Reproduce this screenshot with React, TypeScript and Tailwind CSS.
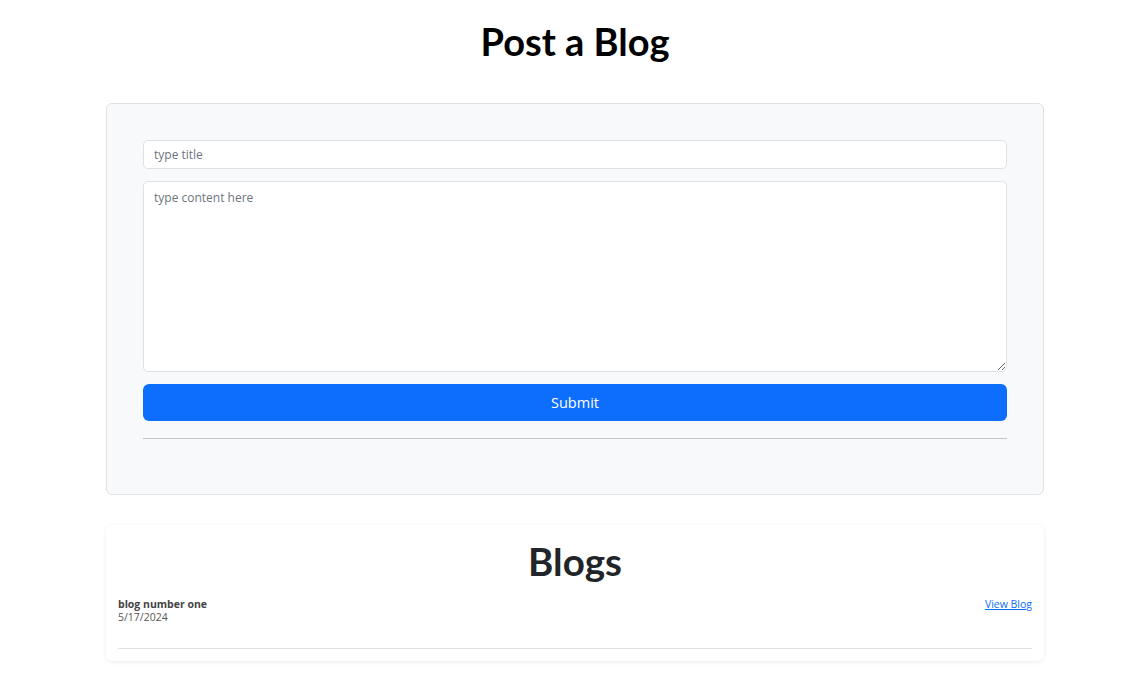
import React from 'react';

export default function App() {
  return (
    <div className="min-h-screen bg-white pl-[15px] font-['Open_Sans','Liberation_Sans',sans-serif] text-[#212529]">
      <div className="mx-auto w-[938px]">
        {/* Page heading */}
        <h1 className="pt-[18px] text-center font-['Lato','Open_Sans',sans-serif] text-[38px] font-bold leading-[47px] text-black">
          Post a Blog
        </h1>

        {/* Post form */}
        <form
          onSubmit={e => e.preventDefault()}
          className="mt-[38px] flex flex-col rounded-md border border-[#dee2e6] bg-[#f8f9fa] px-[36px] pt-[36px] pb-[55px]"
        >
          <input
            type="text"
            placeholder="type title"
            className="h-[29px] w-full rounded-[5px] border border-[#dee2e6] bg-white px-[10px] text-[12px] outline-none placeholder:text-[#6c757d]"
          />
          <textarea
            placeholder="type content here"
            className="mt-[12px] h-[191px] w-full rounded-[5px] border border-[#dee2e6] bg-white px-[10px] py-[7px] text-[12px] outline-none placeholder:text-[#6c757d]"
          />
          <button
            type="submit"
            className="mt-[12px] h-[37px] w-full rounded-md bg-[#0d6efd] text-[14.5px] text-white"
          >
            Submit
          </button>
          <hr className="mt-[17px] border-t border-[#c4c5c7]" />
        </form>

        {/* Blog list */}
        <div className="mt-[30px] rounded-md bg-white px-[12px] pt-[13px] pb-[12px] shadow-[0_1px_4px_rgba(0,0,0,0.08)]">
          <h1 className="text-center font-['Lato','Open_Sans',sans-serif] text-[38.5px] font-bold leading-[47px] text-[#212529]">
            Blogs
          </h1>
          <div className="mt-[13px] flex items-start justify-between text-[10.5px] leading-[13px]">
            <div>
              <div className="font-bold text-[#444]">blog number one</div>
              <div className="text-[#555]">5/17/2024</div>
            </div>
            <a href="#" className="text-[#0d6efd] underline">
              View Blog
            </a>
          </div>
          <hr className="mt-[24px] border-t border-[#dee2e6]" />
        </div>
      </div>
    </div>
  );
}
